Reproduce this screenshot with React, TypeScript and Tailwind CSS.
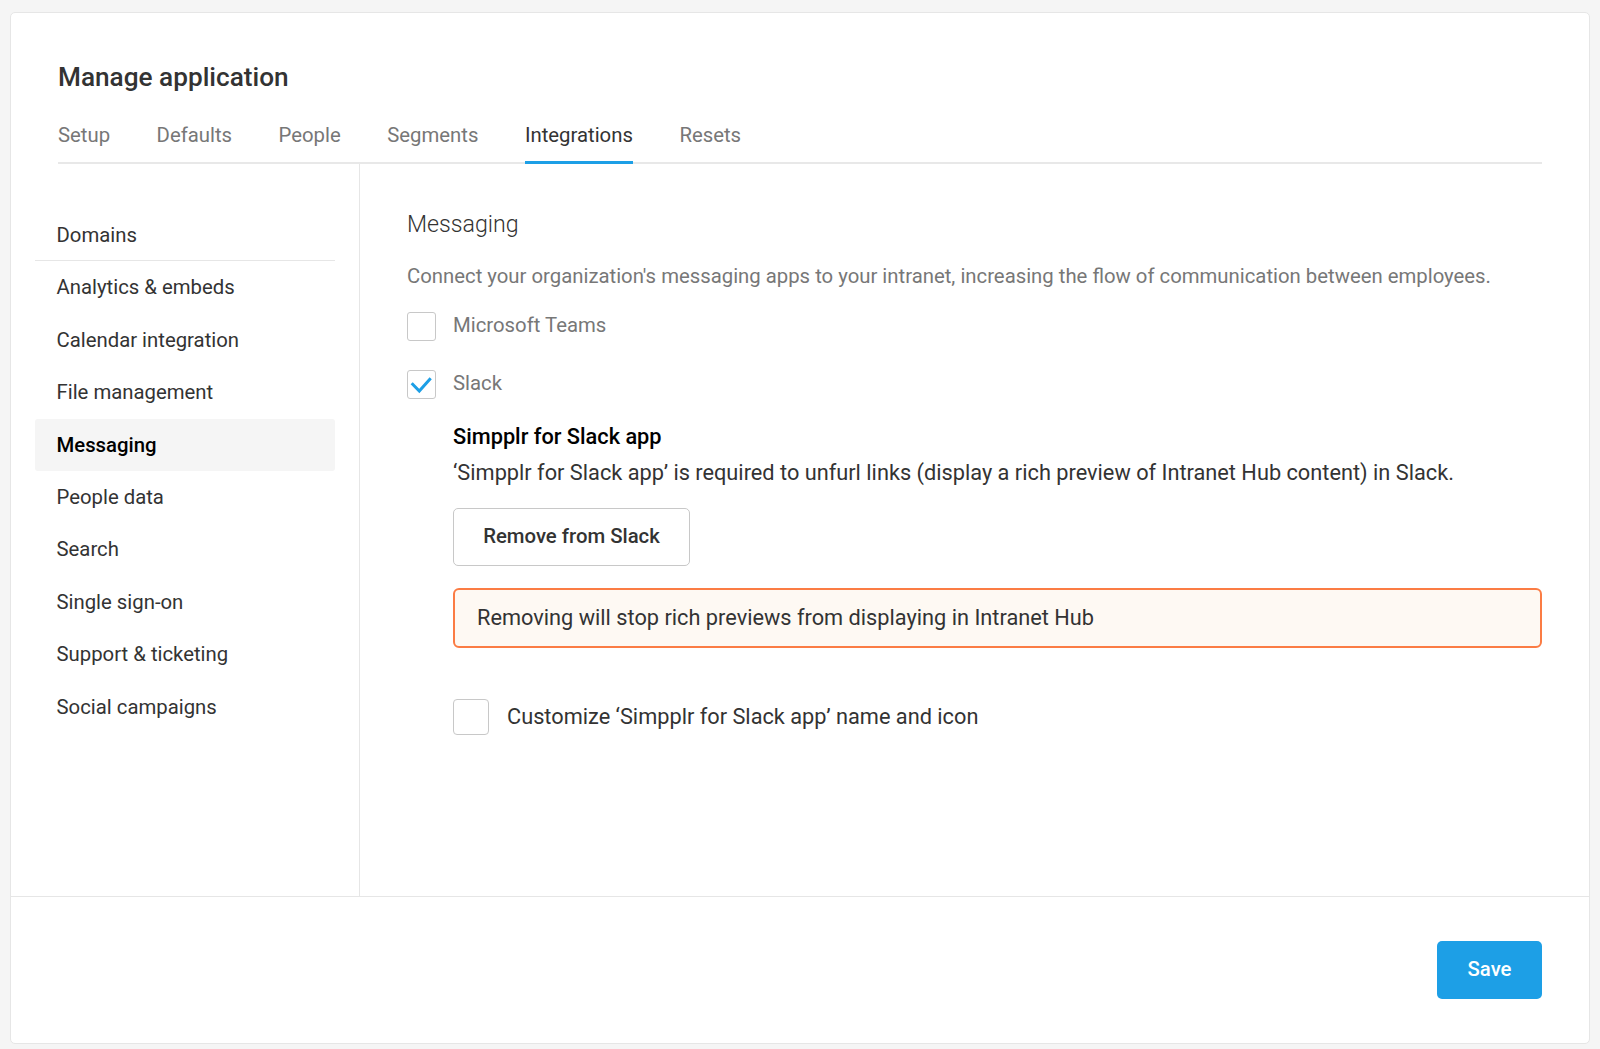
const tabs = ['Setup', 'Defaults', 'People', 'Segments', 'Integrations', 'Resets'];
const sideItems = [
  'Domains',
  'Analytics & embeds',
  'Calendar integration',
  'File management',
  'Messaging',
  'People data',
  'Search',
  'Single sign-on',
  'Support & ticketing',
  'Social campaigns',
];

export default function App() {
  return (
    <div className="min-h-[1049px] bg-[#f5f5f5] pl-[10px] pt-[12px] font-['Roboto',sans-serif] text-[20.32px] text-[#333]">
      <div className="flex h-[1031.5px] w-[1580px] flex-col rounded-[5px] border border-[#e6e6e6] bg-white">
        {/* Header */}
        <div className="px-[47px] pt-[46px]">
          <h1 className="h-[36px] text-[26.2px] leading-[36px] font-medium">Manage application</h1>
          <div className="mt-[20px] flex gap-[46.5px] border-b-2 border-[#e8e8e8]">
            {tabs.map((tab) => (
              <div
                key={tab}
                className={
                  tab === 'Integrations'
                    ? '-mb-[2px] h-[49px] border-b-[3px] border-[#1d9fe6] pt-[6px] leading-[28px] text-[#333]'
                    : 'h-[47px] pt-[6px] leading-[28px] text-[#777]'
                }
              >
                {tab}
              </div>
            ))}
          </div>
        </div>

        {/* Body */}
        <div className="flex flex-1">
          <div className="w-[349px] shrink-0 border-r border-[#e6e6e6] pt-[45.1px] pr-[24px] pl-[24px]">
            {sideItems.map((item) => (
              <div
                key={item}
                className={
                  item === 'Messaging'
                    ? 'flex h-[52.4px] items-center rounded-[3px] bg-[#f5f5f5] px-[21.5px] font-medium text-black'
                    : item === 'Domains'
                      ? 'flex h-[52.4px] items-center border-b border-[#e6e6e6] px-[21.5px]'
                      : 'flex h-[52.4px] items-center px-[21.5px]'
                }
              >
                {item}
              </div>
            ))}
          </div>

          <div className="flex-1 pt-[43px] pr-[47px] pl-[47px]">
            <h2 className="text-[23.2px] leading-[34px] font-light">Messaging</h2>
            <p className="mt-[21px] leading-[28px] text-[#777]">
              Connect your organization's messaging apps to your intranet, increasing the flow of communication between employees.
            </p>

            <div className="mt-[21px] flex items-start gap-[17px]">
              <div className="mt-[0.5px] h-[29px] w-[29px] rounded-[3px] border border-[#c8c8c8]" />
              <span className="leading-[28px] text-[#777]">Microsoft Teams</span>
            </div>
            <div className="mt-[28.5px] flex items-start gap-[17px]">
              <div className="mt-[1px] h-[29px] w-[29px] rounded-[3px] border border-[#c8c8c8]">
                <svg viewBox="0 0 27 27" className="h-[27px] w-[27px]" fill="none" stroke="#1d9fe6" strokeWidth="3">
                  <path d="M3.7 12.3L11.3 20L22.7 7.3" />
                </svg>
              </div>
              <span className="leading-[28px] text-[#777]">Slack</span>
            </div>

            <div className="pl-[46px] text-[21.75px]">
              <div className="mt-[24px] leading-[28px] font-medium text-black">Simpplr for Slack app</div>
              <p className="mt-[7.5px] leading-[28px]">
                ‘Simpplr for Slack app’ is required to unfurl links (display a rich preview of Intranet Hub content) in Slack.
              </p>
              <button className="mt-[21px] h-[58px] w-[237px] rounded-[5px] border border-[#c8c8c8] bg-white text-[20.32px] font-medium">
                Remove from Slack
              </button>
              <div className="mt-[22px] flex h-[60px] items-center rounded-[6px] border-2 border-[#fb7c44] bg-[#fef9f3] px-[22px] pt-[2px]">
                Removing will stop rich previews from displaying in Intranet Hub
              </div>
              <div className="mt-[51px] flex items-center gap-[18px]">
                <div className="h-[36px] w-[36px] rounded-[4px] border border-[#c8c8c8]" />
                <span className="pt-[2px]">Customize ‘Simpplr for Slack app’ name and icon</span>
              </div>
            </div>
          </div>
        </div>

        {/* Footer */}
        <div className="flex h-[146.5px] shrink-0 justify-end border-t border-[#e6e6e6] pt-[43.5px] pr-[47px]">
          <button className="h-[58px] w-[105px] rounded-[5px] bg-[#1d9fe6] font-medium text-white">Save</button>
        </div>
      </div>
    </div>
  );
}
